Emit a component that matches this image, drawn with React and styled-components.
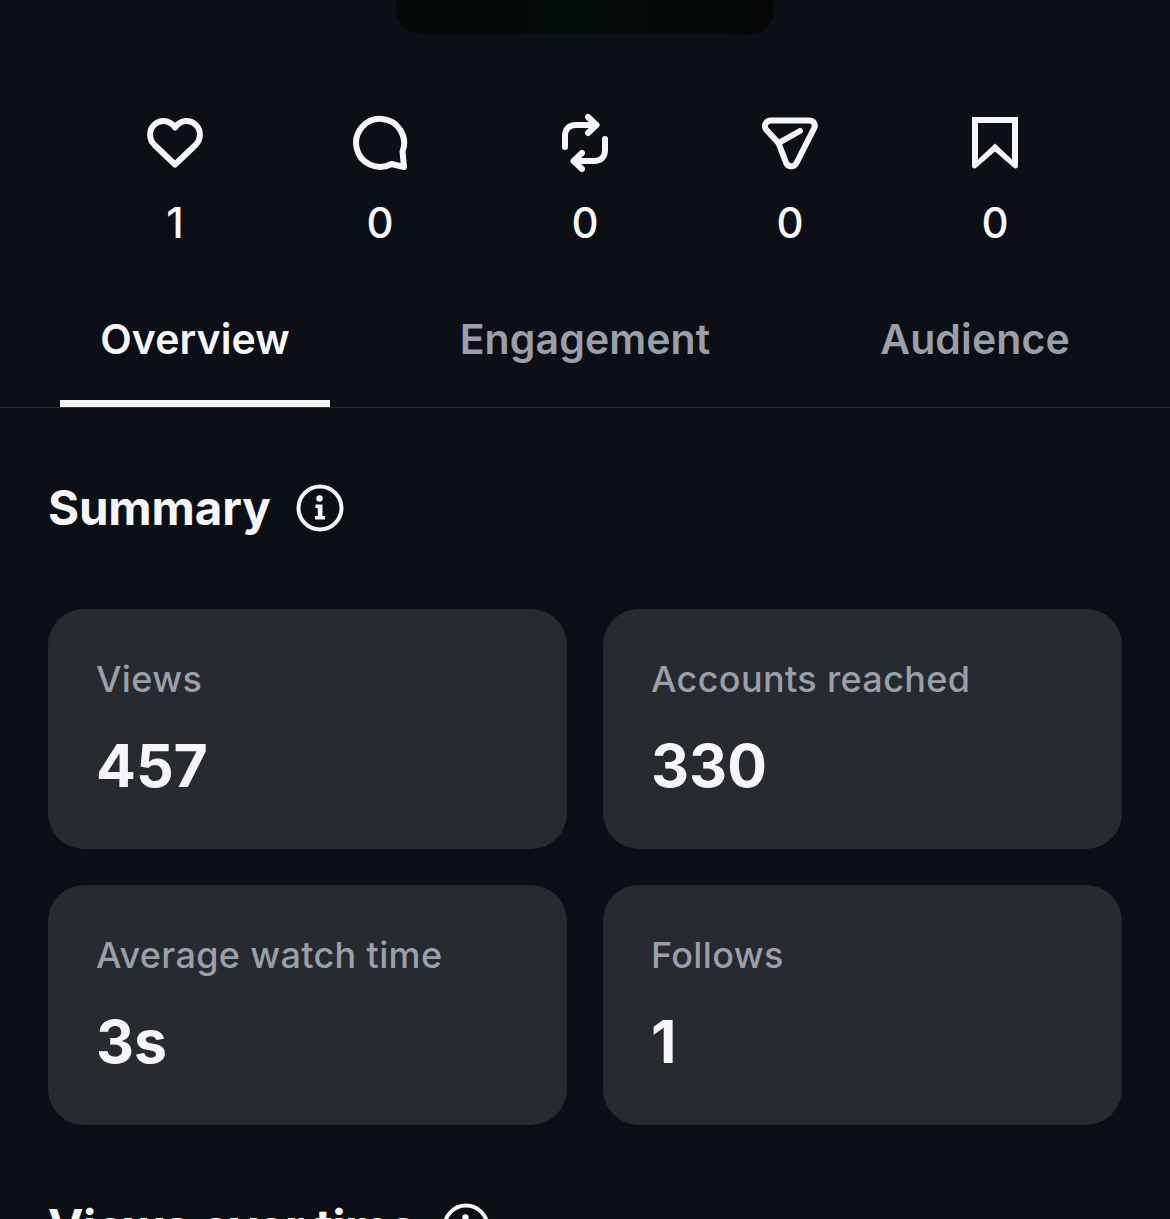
import React from 'react';
import styled, { createGlobalStyle } from 'styled-components';

const GlobalStyle = createGlobalStyle`
  html, body {
    margin: 0;
    height: 1219px;
    overflow: hidden;
    background: #0c0f15;
  }
`;

const Page = styled.div`
  width: 1170px;
  font-family: Inter, "Liberation Sans", sans-serif;
  color: #f6f6f8;
`;

const Thumb = styled.div`
  width: 378px;
  height: 34px;
  margin: 0 auto;
  border-radius: 0 0 24px 24px;
  background: linear-gradient(90deg, #050807 0%, #040807 30%, #040d0a 42%, #050b09 60%, #040706 100%);
`;

const StatsRow = styled.div`
  display: grid;
  grid-template-columns: repeat(5, 205px);
  justify-content: center;
  margin-top: 79px;
`;

const Stat = styled.div`
  display: flex;
  flex-direction: column;
  align-items: center;
`;

const StatIcon = styled.svg`
  display: block;
  width: 60px;
  height: 60px;
  fill: none;
  stroke: #f6f6f8;
  stroke-width: 6;
  stroke-linecap: round;
  stroke-linejoin: round;
`;

const StatValue = styled.span`
  margin-top: 25px;
  font-size: 42px;
  line-height: 50px;
  font-weight: 500;
`;

const Tabs = styled.div`
  display: grid;
  grid-template-columns: repeat(3, 1fr);
  margin-top: 65px;
  border-bottom: 1px solid #2b2e34;
`;

const Tab = styled.div`
  display: flex;
  justify-content: center;
  padding: 0 60px;
`;

const TabLabel = styled.div`
  width: 270px;
  height: 94px;
  box-sizing: border-box;
  text-align: center;
  font-size: 41px;
  letter-spacing: 0.1px;
  line-height: 52px;
  font-weight: 600;
  white-space: nowrap;
  color: ${props => props.active ? '#f6f6f8' : '#9b9fa9'};
  border-bottom: 7px solid ${props => props.active ? '#f6f6f8' : 'transparent'};
`;

const Section = styled.section`
  padding: 0 48px;
`;

const Heading = styled.h2`
  display: flex;
  align-items: center;
  gap: 25px;
  margin: ${props => props.top}px 0 0;
  font-size: 47.5px;
  letter-spacing: -0.15px;
  line-height: 56px;
  font-weight: 700;
`;

const InfoIcon = styled.svg`
  display: block;
  width: 48px;
  height: 48px;
  flex: none;
`;

const Cards = styled.div`
  display: grid;
  grid-template-columns: repeat(2, 1fr);
  gap: 36px;
  margin-top: 73px;
`;

const Card = styled.div`
  height: 240px;
  box-sizing: border-box;
  padding: 48px 48px 0;
  border-radius: 36px;
  background: #272a2f;
`;

const CardLabel = styled.div`
  font-size: 36px;
  letter-spacing: 0.35px;
  line-height: 44px;
  font-weight: 500;
  color: #9b9fa9;
`;

const CardValue = styled.div`
  margin-top: 29px;
  font-size: 59px;
  line-height: 72px;
  font-weight: 700;
`;

const Info = () => (
  <InfoIcon viewBox="0 0 48 48">
    <circle cx="24" cy="24" r="21.5" fill="none" stroke="#f6f6f8" strokeWidth="4" />
    <circle cx="23.5" cy="14.5" r="3.2" fill="#f6f6f8" />
    <path d="M19.5 20.5h7V32H29v3.5H19V32h2.8v-8h-2.3z" fill="#f6f6f8" />
  </InfoIcon>
);

const icons = {
  heart: (
    <path d="M30 51.5 L9.5 32 C4 26.5 3.5 17.5 9 12 C14.5 6.5 24 6 30 14.5 C36 6 45.5 6.5 51 12 C56.5 17.5 56 26.5 50.5 32 Z" />
  ),
  comment: (
    <path d="M52.5 38.5 A24 24 0 1 0 41.5 51 L54 54 Z" />
  ),
  repost: (
    <>
      <path d="M33 4 L41.5 12 L33 20" />
      <path d="M41 12 H21 C14 12 10 16 10 23 V34" />
      <path d="M27 40 L18.5 48 L27 56" />
      <path d="M19 48 H39 C46 48 50 44 50 37 V26" />
    </>
  ),
  send: (
    <>
      <path d="M11 7.5 H49 C54 7.5 56 12 54 15.5 L36.5 50 C34 55 27.5 54 26 49.5 L18.5 30 L6.5 17 C3 13 6 7.5 11 7.5 Z" />
      <path d="M18.5 30 L40 18" />
    </>
  ),
  bookmark: (
    <path
      d="M7 4H53V53a2.5 2.5 0 0 1-4.2 1.8L30 38.5 11.2 54.8A2.5 2.5 0 0 1 7 53ZM13 10V46.5L30 30.5 47 46.5V10Z"
      fill="#f6f6f8"
      fillRule="evenodd"
      stroke="none"
    />
  ),
};

const stats = [
  { icon: 'heart', value: 1 },
  { icon: 'comment', value: 0 },
  { icon: 'repost', value: 0 },
  { icon: 'send', value: 0 },
  { icon: 'bookmark', value: 0 },
];

const tabs = ['Overview', 'Engagement', 'Audience'];

const summary = [
  { label: 'Views', value: '457' },
  { label: 'Accounts reached', value: '330' },
  { label: 'Average watch time', value: '3s' },
  { label: 'Follows', value: '1' },
];

const App = () => (
  <Page>
    <GlobalStyle />
    <Thumb />

    <StatsRow>
      {stats.map(stat => (
        <Stat key={stat.icon}>
          <StatIcon viewBox="0 0 60 60">{icons[stat.icon]}</StatIcon>
          <StatValue>{stat.value}</StatValue>
        </Stat>
      ))}
    </StatsRow>

    <Tabs>
      {tabs.map((tab, i) => (
        <Tab key={tab}>
          <TabLabel active={i === 0}>{tab}</TabLabel>
        </Tab>
      ))}
    </Tabs>

    <Section>
      <Heading top={72}>Summary <Info /></Heading>

      <Cards>
        {summary.map(item => (
          <Card key={item.label}>
            <CardLabel>{item.label}</CardLabel>
            <CardValue>{item.value}</CardValue>
          </Card>
        ))}
      </Cards>

      <Heading top={74}>Views over time <Info /></Heading>
    </Section>
  </Page>
);

export default App;
